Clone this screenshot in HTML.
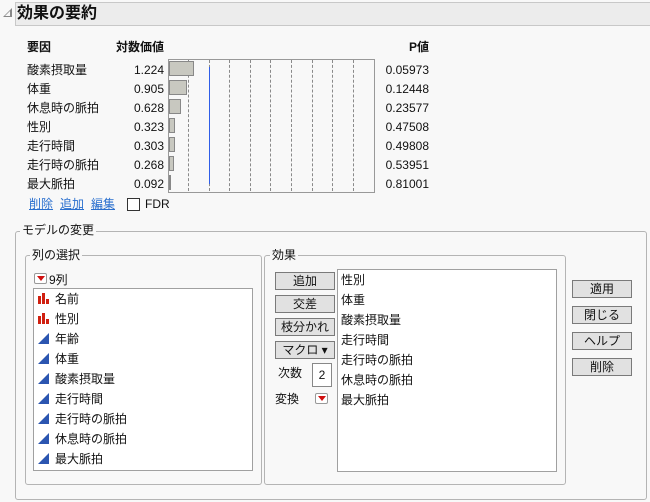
<!DOCTYPE html>
<html><head><meta charset="utf-8"><style>
*{margin:0;padding:0;box-sizing:border-box}
body{width:650px;height:502px;background:#f8f8f8;font-family:"Liberation Sans","Noto Sans CJK JP",sans-serif;font-size:12px;color:#111;position:relative;overflow:hidden}
.a{position:absolute;white-space:nowrap;line-height:14px}
.r{text-align:right}
.box{position:absolute;border:1px solid #b4b4b4;border-radius:3px}
.wb{position:absolute;background:#fff;border:1px solid #a0a0a0}
.btn{position:absolute;background:#e1e1e1;border:1px solid #7a7a7a;text-align:center;line-height:16px;height:18px;font-size:12px}
.leg{position:absolute;background:#f8f8f8;padding:0 2px;line-height:14px}
.bar{position:absolute;background:#c8c8c0;border:1px solid #888;height:15px;left:169px}
.dl{position:absolute;top:60px;height:131px;border-left:1px dashed #8a8a8a}
.lk{color:#2a6fce;text-decoration:underline}
.bi{position:absolute;width:11px;height:11px}
.tri{position:absolute;width:0;height:0;border-left:11px solid transparent;border-bottom:11px solid #2b55b0}
.dd{position:absolute;width:13px;height:11px;background:#fff;border:1px solid #999;border-radius:2px}
.dd:after{content:"";position:absolute;left:2px;top:2px;border-left:4px solid transparent;border-right:4px solid transparent;border-top:5px solid #d01010}
</style></head><body>
<div class="a" style="left:3px;top:8px;width:0;height:0;border-left:9px solid transparent;border-bottom:9px solid #888"></div>
<div class="a" style="left:5px;top:11px;width:0;height:0;border-left:5px solid transparent;border-bottom:5px solid #f8f8f8"></div>
<div class="a" style="left:15px;top:2px;width:640px;height:24px;background:#ececec;border:1px solid #c8c8c8"></div>
<div class="a" style="left:17px;top:5px;font-size:16px;font-weight:bold;line-height:18px">効果の要約</div>

<div class="a" style="left:27px;top:40px;font-weight:bold">要因</div>
<div class="a r" style="left:100px;width:64px;top:40px;font-weight:bold">対数価値</div>
<div class="a r" style="left:370px;width:59px;top:40px;font-weight:bold">P値</div>

<div class="a" style="left:168px;top:59px;width:207px;height:134px;border:1px solid #999"></div>
<div class="dl" style="left:188px"></div><div class="dl" style="left:209px"></div><div class="dl" style="left:229px"></div><div class="dl" style="left:250px"></div><div class="dl" style="left:270px"></div><div class="dl" style="left:291px"></div><div class="dl" style="left:312px"></div><div class="dl" style="left:332px"></div><div class="dl" style="left:353px"></div>
<div class="bar" style="top:61px;width:25px"></div>
<div class="bar" style="top:80px;width:18px"></div>
<div class="bar" style="top:99px;width:12px"></div>
<div class="bar" style="top:118px;width:6px"></div>
<div class="bar" style="top:137px;width:6px"></div>
<div class="bar" style="top:156px;width:5px"></div>
<div class="bar" style="top:175px;width:2px"></div>
<div class="a" style="left:209px;top:67px;width:1px;height:117px;background:#2f5ee8"></div>

<div class="a" style="left:27px;top:63px">酸素摂取量</div><div class="a r" style="left:100px;width:64px;top:63px">1.224</div><div class="a r" style="left:370px;width:59px;top:63px">0.05973</div>
<div class="a" style="left:27px;top:82px">体重</div><div class="a r" style="left:100px;width:64px;top:82px">0.905</div><div class="a r" style="left:370px;width:59px;top:82px">0.12448</div>
<div class="a" style="left:27px;top:101px">休息時の脈拍</div><div class="a r" style="left:100px;width:64px;top:101px">0.628</div><div class="a r" style="left:370px;width:59px;top:101px">0.23577</div>
<div class="a" style="left:27px;top:120px">性別</div><div class="a r" style="left:100px;width:64px;top:120px">0.323</div><div class="a r" style="left:370px;width:59px;top:120px">0.47508</div>
<div class="a" style="left:27px;top:139px">走行時間</div><div class="a r" style="left:100px;width:64px;top:139px">0.303</div><div class="a r" style="left:370px;width:59px;top:139px">0.49808</div>
<div class="a" style="left:27px;top:158px">走行時の脈拍</div><div class="a r" style="left:100px;width:64px;top:158px">0.268</div><div class="a r" style="left:370px;width:59px;top:158px">0.53951</div>
<div class="a" style="left:27px;top:177px">最大脈拍</div><div class="a r" style="left:100px;width:64px;top:177px">0.092</div><div class="a r" style="left:370px;width:59px;top:177px">0.81001</div>

<div class="a lk" style="left:29px;top:197px">削除</div>
<div class="a lk" style="left:60px;top:197px">追加</div>
<div class="a lk" style="left:91px;top:197px">編集</div>
<div class="a" style="left:127px;top:198px;width:13px;height:13px;background:#fff;border:1px solid #333"></div>
<div class="a" style="left:145px;top:197px">FDR</div>

<div class="box" style="left:15px;top:231px;width:632px;height:269px"></div>
<div class="leg" style="left:20px;top:223px">モデルの変更</div>

<div class="box" style="left:25px;top:255px;width:237px;height:230px"></div>
<div class="leg" style="left:30px;top:248px">列の選択</div>
<div class="dd" style="left:34px;top:273px"></div>
<div class="a" style="left:49px;top:273px">9列</div>
<div class="wb" style="left:33px;top:288px;width:220px;height:183px"></div>

<div class="box" style="left:264px;top:255px;width:302px;height:230px"></div>
<div class="leg" style="left:270px;top:248px">効果</div>
<div class="btn" style="left:275px;top:272px;width:60px">追加</div>
<div class="btn" style="left:275px;top:295px;width:60px">交差</div>
<div class="btn" style="left:275px;top:318px;width:60px">枝分かれ</div>
<div class="btn" style="left:275px;top:341px;width:60px">マクロ ▾</div>
<div class="a" style="left:278px;top:366px">次数</div>
<div class="a" style="left:312px;top:363px;width:20px;height:24px;background:#fff;border:1px solid #888;text-align:center;line-height:22px">2</div>
<div class="a" style="left:275px;top:392px">変換</div>
<div class="dd" style="left:315px;top:393px"></div>
<div class="wb" style="left:337px;top:269px;width:220px;height:203px"></div>
<div class="a" style="left:341px;top:273px">性別</div>
<div class="a" style="left:341px;top:293px">体重</div>
<div class="a" style="left:341px;top:313px">酸素摂取量</div>
<div class="a" style="left:341px;top:333px">走行時間</div>
<div class="a" style="left:341px;top:353px">走行時の脈拍</div>
<div class="a" style="left:341px;top:373px">休息時の脈拍</div>
<div class="a" style="left:341px;top:393px">最大脈拍</div>

<div class="btn" style="left:572px;top:280px;width:60px">適用</div>
<div class="btn" style="left:572px;top:306px;width:60px">閉じる</div>
<div class="btn" style="left:572px;top:332px;width:60px">ヘルプ</div>
<div class="btn" style="left:572px;top:358px;width:60px">削除</div>

<div class="bi" style="left:38px;top:293px"><div style="position:absolute;left:0;top:3px;width:3px;height:8px;background:#d02010"></div><div style="position:absolute;left:4px;top:0;width:3px;height:11px;background:#d02010"></div><div style="position:absolute;left:8px;top:6px;width:3px;height:5px;background:#d02010"></div></div>
<div class="a" style="left:55px;top:292px">名前</div>
<div class="bi" style="left:38px;top:313px"><div style="position:absolute;left:0;top:3px;width:3px;height:8px;background:#d02010"></div><div style="position:absolute;left:4px;top:0;width:3px;height:11px;background:#d02010"></div><div style="position:absolute;left:8px;top:6px;width:3px;height:5px;background:#d02010"></div></div>
<div class="a" style="left:55px;top:312px">性別</div>
<div class="tri" style="left:38px;top:333px"></div><div class="a" style="left:55px;top:332px">年齢</div>
<div class="tri" style="left:38px;top:353px"></div><div class="a" style="left:55px;top:352px">体重</div>
<div class="tri" style="left:38px;top:373px"></div><div class="a" style="left:55px;top:372px">酸素摂取量</div>
<div class="tri" style="left:38px;top:393px"></div><div class="a" style="left:55px;top:392px">走行時間</div>
<div class="tri" style="left:38px;top:413px"></div><div class="a" style="left:55px;top:412px">走行時の脈拍</div>
<div class="tri" style="left:38px;top:433px"></div><div class="a" style="left:55px;top:432px">休息時の脈拍</div>
<div class="tri" style="left:38px;top:453px"></div><div class="a" style="left:55px;top:452px">最大脈拍</div>
</body></html>
